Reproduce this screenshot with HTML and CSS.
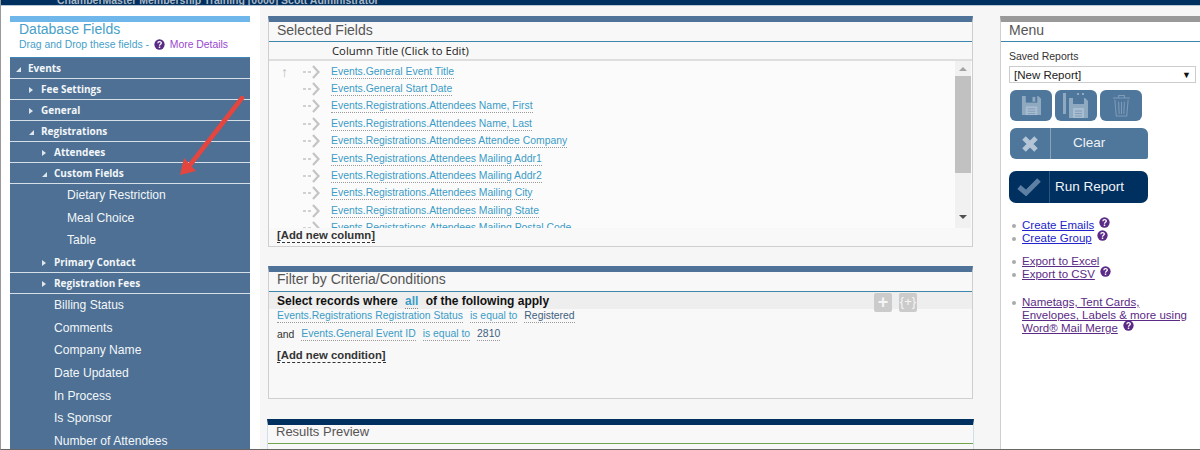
FILE: index.html
```html
<!DOCTYPE html>
<html lang="en">
<head>
<meta charset="utf-8">
<title>Report Builder</title>
<link rel="stylesheet" href="styles.css">
</head>
<body>
<svg width="0" height="0" class="defs">
  <symbol id="go" viewBox="0 0 17 14"><path d="M0 7h3M5 7h3" stroke="#c4c4c4" stroke-width="1.4" fill="none"/><path d="M10 1l5.500 6-5.500 6" stroke="#c4c4c4" stroke-width="2.2" fill="none"/></symbol>
  <symbol id="q" viewBox="0 0 12 12"><circle cx="6" cy="6" r="5.6" fill="#5b2a86"/><path d="M4.200 4.600c0-2.300 3.800-2.300 3.800-.2 0 1.400-2 1.400-2 2.900" stroke="#fff" stroke-width="1.400" fill="none"/><rect x="5.200" y="8.200" width="1.600" height="1.600" fill="#fff"/></symbol>
</svg>
<header class="topbar"><span>ChamberMaster Membership Training [0000] Scott Administrator</span></header>
<div class="page">
  <aside class="side">
    <div class="fields">
      <div class="fields-head">
        <h2>Database Fields</h2>
        <p>Drag and Drop these fields - <svg class="q-inline"><use href="#q"/></svg> <a>More Details</a></p>
      </div>
      <ul class="tree">
        <li class="node open l0">Events</li>
        <li class="node l1">Fee Settings</li>
        <li class="node l1">General</li>
        <li class="node open l1">Registrations</li>
        <li class="node l2">Attendees</li>
        <li class="node open l2">Custom Fields</li>
        <li class="leaf deep">Dietary Restriction</li>
        <li class="leaf deep">Meal Choice</li>
        <li class="leaf deep">Table</li>
        <li class="node l2">Primary Contact</li>
        <li class="node l2">Registration Fees</li>
        <li class="leaf">Billing Status</li>
        <li class="leaf">Comments</li>
        <li class="leaf">Company Name</li>
        <li class="leaf">Date Updated</li>
        <li class="leaf">In Process</li>
        <li class="leaf">Is Sponsor</li>
        <li class="leaf">Number of Attendees</li>
      </ul>
    </div>
    <svg class="red-arrow" viewBox="0 0 70 85" width="70" height="85"><path d="M64 2L12 69" stroke="#e5453f" stroke-width="4.500" stroke-linecap="round" fill="none"/><path d="M2 79L6 62 18 75z" fill="#e5453f"/></svg>
  </aside>

  <main class="center">
    <section class="panel selected">
      <h3>Selected Fields</h3>
      <div class="col-head">Column Title (Click to Edit)</div>
      <div class="list-wrap">
        <div class="list">
          <div class="row"><span class="up">&#8593;</span><svg class="go"><use href="#go"/></svg><a>Events.General Event Title</a></div>
          <div class="row"><span class="up"></span><svg class="go"><use href="#go"/></svg><a>Events.General Start Date</a></div>
          <div class="row"><span class="up"></span><svg class="go"><use href="#go"/></svg><a>Events.Registrations.Attendees Name, First</a></div>
          <div class="row"><span class="up"></span><svg class="go"><use href="#go"/></svg><a>Events.Registrations.Attendees Name, Last</a></div>
          <div class="row"><span class="up"></span><svg class="go"><use href="#go"/></svg><a>Events.Registrations.Attendees Attendee Company</a></div>
          <div class="row"><span class="up"></span><svg class="go"><use href="#go"/></svg><a>Events.Registrations.Attendees Mailing Addr1</a></div>
          <div class="row"><span class="up"></span><svg class="go"><use href="#go"/></svg><a>Events.Registrations.Attendees Mailing Addr2</a></div>
          <div class="row"><span class="up"></span><svg class="go"><use href="#go"/></svg><a>Events.Registrations.Attendees Mailing City</a></div>
          <div class="row"><span class="up"></span><svg class="go"><use href="#go"/></svg><a>Events.Registrations.Attendees Mailing State</a></div>
          <div class="row"><span class="up"></span><svg class="go"><use href="#go"/></svg><a>Events.Registrations.Attendees Mailing Postal Code</a></div>
        </div>
        <div class="scrollbar">
          <span class="sb-up"></span>
          <span class="sb-thumb"></span>
          <span class="sb-down"></span>
        </div>
      </div>
      <div class="add">[Add new column]</div>
    </section>

    <section class="panel filter">
      <h3>Filter by Criteria/Conditions</h3>
      <div class="band">
        <b>Select records where <a class="all">all</a> of the following apply</b>
        <div class="band-btns"><span class="mini plus">+</span><span class="mini">{+}</span></div>
      </div>
      <div class="cond"><a>Events.Registrations Registration Status</a><a>is equal to</a><a class="val">Registered</a></div>
      <div class="cond"><span>and</span><a>Events.General Event ID</a><a>is equal to</a><a class="val">2810</a></div>
      <div class="add cond-add">[Add new condition]</div>
    </section>

    <section class="panel results">
      <h3>Results Preview</h3>
    </section>
  </main>

  <aside class="menu">
    <h3>Menu</h3>
    <div class="menu-body">
      <label>Saved Reports</label>
      <div class="select"><span>[New Report]</span><span class="caret">&#9660;</span></div>
      <div class="icon-btns">
        <button class="ib"><svg viewBox="0 0 22 22" width="21" height="21"><path d="M1 1h17l3 3v17H1z" fill="#8fa9c1"/><path d="M5 1h12v7H5z" fill="#4f769b"/><path d="M12 2h3v5h-3z" fill="#8fa9c1"/><path d="M5 12h12v9H5z" fill="#a9bdd0"/><path d="M7 14.500h8M7 17h8M7 19.500h8" stroke="#7f9cb8"/></svg></button>
        <button class="ib"><svg viewBox="0 0 26 25" width="26" height="25"><path d="M0 0h3v21H0z" fill="#8fa9c1"/><path d="M6 5h16l3 3v17H6z" fill="#8fa9c1"/><path d="M10 5h11v6H10z" fill="#4f769b"/><path d="M14 0h2v2h-2zM19 0h2v2h-2z" fill="#8fa9c1"/><path d="M10 15h11v10H10z" fill="#a9bdd0"/><path d="M12 18h7M12 20.500h7M12 23h7" stroke="#7f9cb8"/></svg></button>
        <button class="ib"><svg viewBox="0 0 20 24" width="19" height="23"><path d="M1 4h18M7 4V1.500h6V4M3 6l1.500 17h11L17 6M7 8l.5 13M10 8v13M13 8l-.5 13" stroke="#7f9cb8" stroke-width="1.100" fill="none"/></svg></button>
      </div>
      <button class="wide clear"><span class="wi"><svg viewBox="0 0 18 18" width="18" height="18"><path d="M3 3l12 12M15 3L3 15" stroke="#b4c6d6" stroke-width="5"/></svg></span><span class="wt">Clear</span></button>
      <button class="wide run"><span class="wi"><svg viewBox="0 0 24 18" width="24" height="18"><path d="M2 9l7 6L22 2" stroke="#5d7fa3" stroke-width="5" fill="none"/></svg></span><span class="wt">Run Report</span></button>
      <ul class="links first">
        <li><a class="blue">Create Emails</a><svg class="q"><use href="#q"/></svg></li>
        <li><a class="blue">Create Group</a><svg class="q"><use href="#q"/></svg></li>
      </ul>
      <ul class="links">
        <li><a>Export to Excel</a></li>
        <li><a>Export to CSV</a><svg class="q"><use href="#q"/></svg></li>
      </ul>
      <ul class="links merge">
        <li><a>Nametags, Tent Cards, Envelopes, Labels &amp; more using Word&reg; Mail Merge</a><svg class="q"><use href="#q"/></svg></li>
      </ul>
    </div>
  </aside>
</div>
</body>
</html>
```
FILE: styles.css
```css
* { box-sizing: border-box; }
html, body { margin: 0; padding: 0; }
body {
  height: 450px;
  overflow: hidden;
  background: #f6f6f6;
  font-family: "Liberation Sans", Arial, sans-serif;
  border-left: 1px solid #9a9a9a;
  border-bottom: 1px solid #666;
  display: flex;
  flex-direction: column;
}
.defs { position: absolute; }
ul { list-style: none; margin: 0; padding: 0; }
h2, h3, p { margin: 0; font-weight: normal; }

.topbar {
  flex: none;
  height: 6px;
  background: #00305f;
  border-bottom: 1px solid #b9c7d4;
  overflow: hidden;
  padding-left: 56px;
  font-size: 10.500px;
  line-height: 1px;
  font-weight: bold;
  color: #a9b6c4;
}
.page { flex: 1; min-height: 0; display: flex; align-items: stretch; overflow: hidden; }

.side {
  position: relative;
  flex: none;
  width: 259px;
  background: #fff;
  padding: 10px 0 0 9px;
}
.fields { width: 240px; }
.fields-head {
  height: 41px;
  background: #fff;
  border-top: 6px solid #6fb6ea;
  padding: 0 0 0 9px;
}
.fields-head h2 { font-size: 14px; line-height: 15px; color: #47a0c8; }
.fields-head p { font-size: 10.400px; line-height: 16px; color: #47a0c8; white-space: nowrap; }
.fields-head a { color: #9a48cf; }
.q-inline { width: 11px; height: 11px; vertical-align: -2px; margin: 0 2px; }

.tree { background: #4d7094; color: #f3f6f9; height: 392px; overflow: hidden; border-top: 1px solid #3f85b5; }
.node {
  position: relative;
  height: 21px;
  line-height: 20px;
  font-family: "Open Sans", sans-serif;
  font-size: 10px;
  font-weight: 700;
  border-bottom: 1px solid #d5dfe8;
}
.l0 { padding-left: 18px; }
.l1 { padding-left: 31px; }
.l2 { padding-left: 44px; }
.node::before {
  content: "";
  position: absolute;
  top: 8px;
  width: 0;
  height: 0;
  border-style: solid;
  border-width: 3px 0 3px 4px;
  border-color: transparent transparent transparent #dfe6ec;
}
.l0::before { left: 6px; }
.l1::before { left: 19px; }
.l2::before { left: 32px; }
.node.open::before {
  top: 9px;
  border-width: 0 0 5px 5px;
  border-color: transparent transparent #dfe6ec transparent;
}
.leaf {
  height: 22.670px;
  line-height: 23.670px;
  font-size: 12.100px;
  padding-left: 44px;
  white-space: nowrap;
}
.deep { padding-left: 57px; }
.red-arrow { position: absolute; left: 177px; top: 90px; }

.center {
  flex: none;
  width: 740px;
  padding: 10px 0 0 8px;
  display: flex;
  flex-direction: column;
  overflow: hidden;
}
.panel { flex: none; background: #f8f8f8; border: 1px solid #cfcfcf; border-top: 6px solid #4f7398; }
.panel h3 {
  height: 20px;
  line-height: 17px;
  font-size: 14px;
  color: #555;
  padding-left: 8px;
  border-bottom: 1px solid #3f86ad;
}
.selected { width: 705px; height: 231px; }
.col-head {
  height: 19px;
  line-height: 17px;
  font-family: "Open Sans", sans-serif;
  font-size: 11.300px;
  color: #222;
  padding-left: 63px;
  border-bottom: 2px solid #dedede;
}
.list-wrap { display: flex; height: 167px; background: #fbfbfb; }
.list { flex: 1; overflow: hidden; padding-top: 2px; }
.row { display: flex; align-items: center; height: 17.400px; font-size: 10.400px; white-space: nowrap; }
.row a { color: #3b9cc6; border-bottom: 1px dotted #9a9a9a; line-height: 13px; }
.up { width: 34px; padding-left: 12px; color: #bdbdbd; font-size: 14px; font-weight: bold; }
.go { width: 17px; height: 14px; margin-right: 11px; }
.scrollbar { flex: none; width: 16px; margin-right: 1px; background: #f1f1f1; display: flex; flex-direction: column; align-items: center; }
.sb-up, .sb-down { flex: none; width: 0; height: 0; border-left: 4px solid transparent; border-right: 4px solid transparent; }
.sb-up { margin: 6px 0 5px; border-bottom: 4px solid #a3a3a3; }
.sb-thumb { flex: none; width: 100%; height: 97px; background: #c1c1c1; }
.sb-down { margin-top: 42px; border-top: 4px solid #505050; }
.add {
  display: block;
  width: fit-content;
  margin: 1px 0 0 8px;
  font-size: 11.300px;
  font-weight: bold;
  line-height: 13px;
  color: #333;
  border-bottom: 1px dashed #333;
}
.filter { width: 705px; height: 133px; margin-top: 19px; }
.filter h3 { line-height: 15px; }
.band {
  display: flex;
  justify-content: space-between;
  height: 17px;
  line-height: 18px;
  background: #eeeeee;
  padding-left: 8px;
  font-size: 12px;
  color: #111;
}
.all { color: #3b9cc6; margin: 0 4px; border-bottom: 1px dotted #888; }
.band-btns { display: flex; gap: 7px; margin-right: 55px; padding-top: 1px; height: 21px; }
.mini {
  width: 18px;
  height: 19px;
  border-radius: 2px;
  background: #cbcbcb;
  color: #f5f5f5;
  font-weight: normal;
  font-size: 13px;
  line-height: 18px;
  text-align: center;
}
.mini.plus { font-size: 18px; font-weight: bold; }
.cond { display: flex; gap: 7px; height: 14px; margin-bottom: 4px; align-items: center; padding-left: 8px; font-size: 10.400px; color: #333; }
.cond a { color: #3b9cc6; border-bottom: 1px dotted #9a9a9a; line-height: 12px; }
.cond a.val { color: #3f5f80; }
.cond-add { margin-top: 8px; }
.results {
  width: 707px;
  height: 40px;
  margin: 20px 0 0 -1px;
  background: #f8f8f8;
  border: 1px solid #cfe0ec;
  border-top: 6px solid #00305f;
}
.panel.results h3 { border-bottom: 1px solid #6fa54b; height: 19px; line-height: 13px; font-size: 13px; padding-left: 8px; }

.menu {
  flex: 1;
  margin: 10px 0 0 0;
  background: #fff;
  border-top: 6px solid #999;
  border-left: 1px solid #cfcfcf;
}
.menu h3 { height: 20px; line-height: 17px; font-size: 14px; color: #555; padding-left: 8px; border-bottom: 1px solid #3f86ad; }
.menu-body { padding: 7px 4px 0 8px; }
.menu label { display: block; font-size: 10.500px; line-height: 14px; color: #333; }
.select {
  display: flex;
  justify-content: space-between;
  height: 17px;
  margin-top: 3px;
  padding: 0 4px;
  line-height: 16px;
  font-size: 11.500px;
  color: #222;
  border: 1px solid #ccc;
}
.caret { font-size: 9px; color: #111; }
.icon-btns { display: flex; gap: 3px; margin: 7px 0 0 1px; }
.ib {
  width: 42px;
  height: 31px;
  padding: 0;
  border: 0;
  border-radius: 6px;
  background: #4f769b;
  display: flex;
  align-items: center;
  justify-content: center;
}
.wide {
  display: flex;
  align-items: stretch;
  padding: 0;
  border: 0;
  font-family: inherit;
  color: #eef2f6;
  font-size: 13.500px;
}
.wi { flex: none; width: 41px; display: flex; align-items: center; justify-content: center; border-right: 1px solid #87a2bb; }
.wt { flex: 1; text-align: left; line-height: 30px; }
.clear { width: 138px; height: 31px; margin: 7px 0 0 1px; background: #4f769b; border-radius: 6px 6px 2px 6px; }
.clear .wt { padding-left: 22px; }
.run { width: 139px; height: 32px; margin-top: 12px; background: #00305f; border-radius: 7px; }
.run .wt { padding-left: 5px; line-height: 31px; color: #f2f5f8; }
.run .wi { border-right-color: #2b5682; }
.links { padding-left: 13px; margin-top: 9px; font-size: 11.500px; line-height: 13.400px; }
.links.first { margin-top: 16px; }
.links.merge { margin-top: 14px; width: 183px; }
.links li { position: relative; }
.links li::before {
  content: "";
  position: absolute;
  left: -10px;
  top: 5px;
  width: 4px;
  height: 4px;
  border-radius: 50%;
  background: #aaa;
}
.links a { color: #5b2a86; text-decoration: underline; }
.links a.blue { color: #2323cc; }
.q { width: 11px; height: 11px; margin: -3px 0 0 5px; vertical-align: 1px; }
```
